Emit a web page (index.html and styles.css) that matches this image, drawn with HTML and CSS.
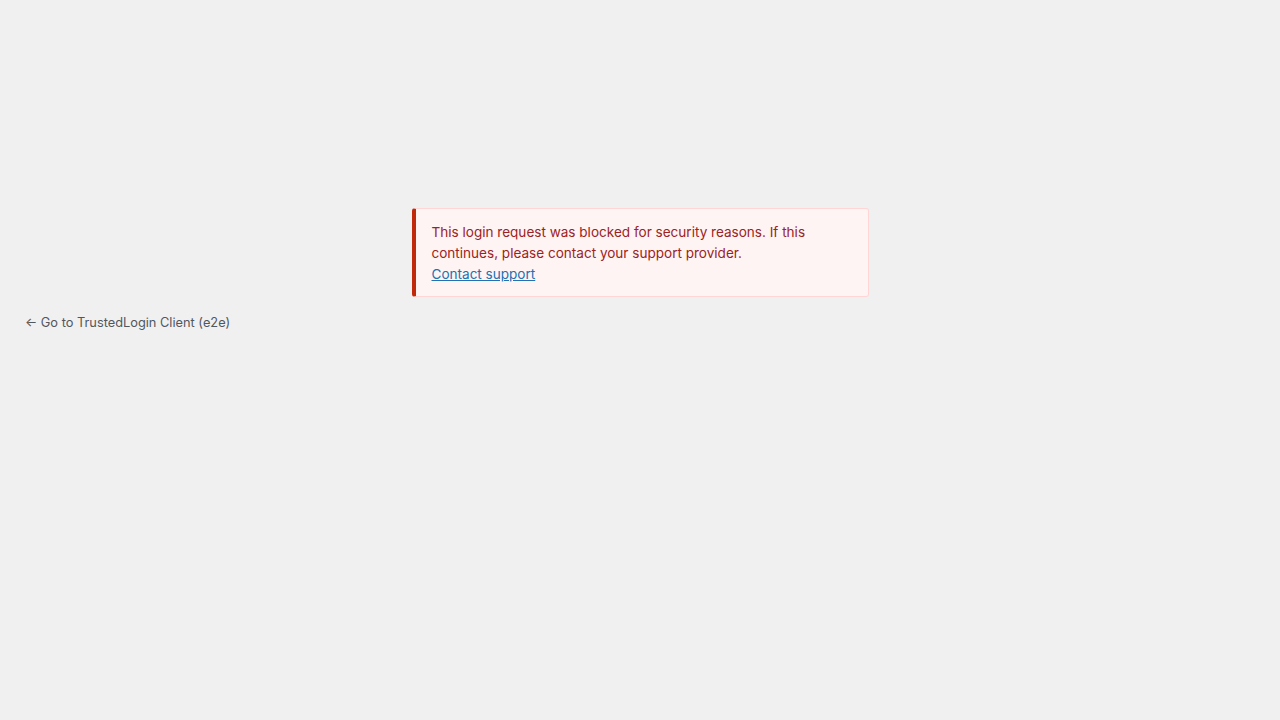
FILE: index.html
```html
<!DOCTYPE html>
<html>
<head>
<meta charset="utf-8">
<link rel="stylesheet" href="styles.css">
</head>
<body>
<div class="page">
  <div class="notice-wrap">
    <div class="notice">
      <p class="msg">This login request was blocked for security reasons. If this continues, please contact your support provider.</p>
      <a class="link" href="#">Contact support</a>
    </div>
  </div>
  <p class="back"><a href="#">← Go to TrustedLogin Client (e2e)</a></p>
</div>
</body>
</html>
```
FILE: styles.css
```css
html, body {
  margin: 0;
  padding: 0;
  background: #f0f0f1;
  font-family: Inter, "Noto Sans", sans-serif;
}
.page {
  padding-top: 208px;
}
.notice-wrap {
  display: flex;
  justify-content: center;
}
.notice {
  box-sizing: border-box;
  width: 457px;
  background: #fff4f4;
  border: 1px solid #ffd5d5;
  border-left: 4px solid #c02a0b;
  border-radius: 3px;
  padding: 13px 16px 11px 16px;
  font-size: 13.55px;
  line-height: 21px;
  color: #9b2323;
}
.msg {
  margin: 0;
}
.link {
  color: #2271b1;
  text-decoration: underline;
}
.back {
  margin: 17px 0 0 25px;
  font-size: 12.8px;
  line-height: 18px;
}
.back a {
  color: #50575e;
  text-decoration: none;
}
```
